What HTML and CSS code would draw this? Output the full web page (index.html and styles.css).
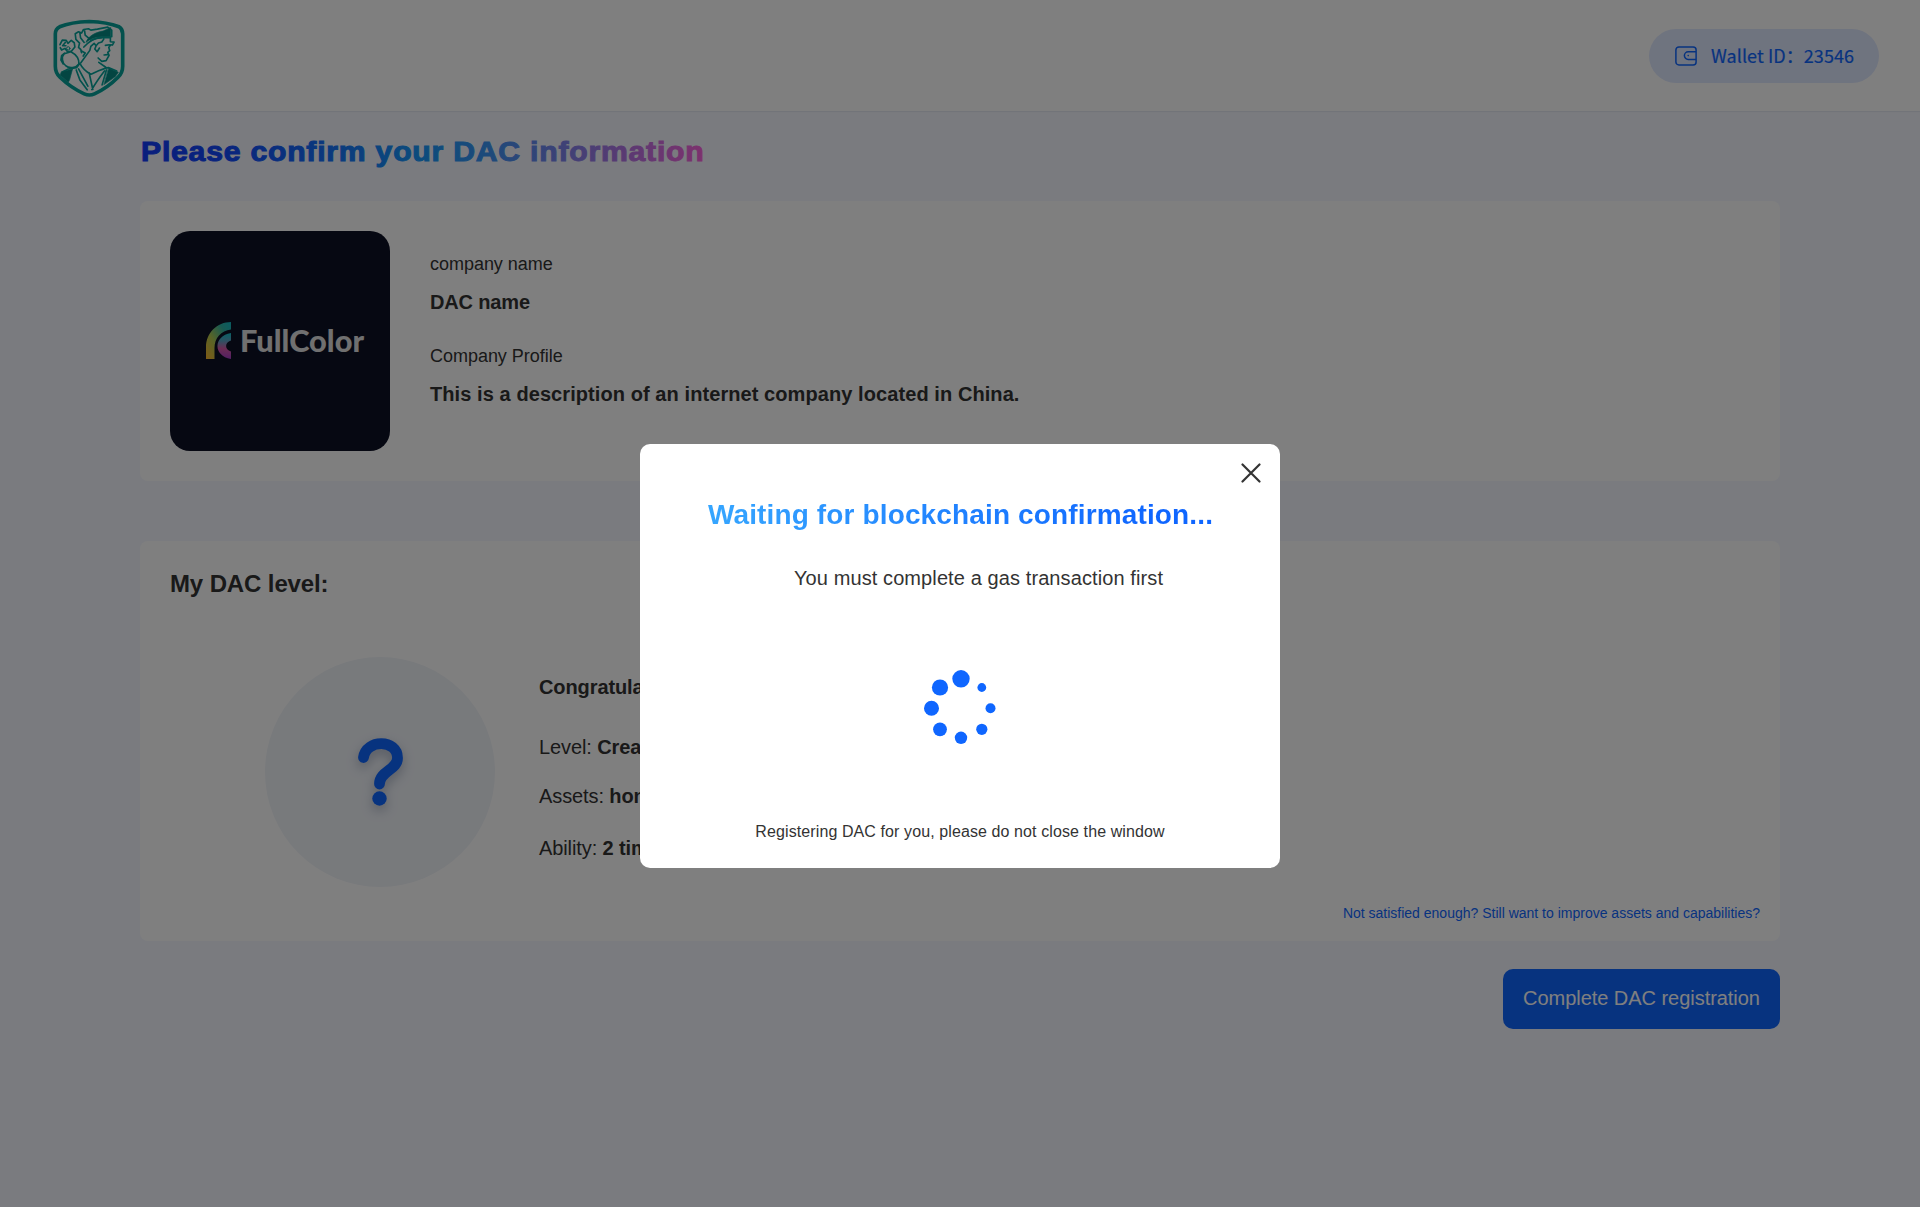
FILE: index.html
```html
<!DOCTYPE html>
<html lang="en">
<head>
<meta charset="utf-8">
<title>Confirm DAC information</title>
<link rel="stylesheet" href="styles.css">
</head>
<body>
<header class="topbar">
  <svg class="crest" viewBox="40 25 220 240" fill="none" stroke="#06a39a" stroke-linejoin="round" stroke-linecap="round">
    <path stroke-width="11" d="M149 35C178 36 214 41 239 51Q250 58 250 72V170Q250 190 236 203C214 225 190 242 165 253Q150 260 134 253C112 243 85 226 61 203Q47 190 47 170V72Q47 58 60 51C84 41 119 36 149 35Z"/>
    <path stroke-width="5" d="M107 72L117 66L126 70L132 59L147 57L154 61L174 58L205 52L217 61V81L190 82C165 83 149 94 133 112M107 72L109 89L120 100L117 113L124 120L126 129M121 69L123 84L134 98M135 62L137 76L151 88"/>
    <path fill="#078b84" stroke-width="2" d="M214 54V81L186 81C166 82 151 88 139 98C148 77 170 67 190 64Z"/>
    <path stroke-width="5" d="M154 92Q169 84 190 84L213 84V96L224 97L219 106L214 105L208 113L211 123L205 128L209 137L200 153L187 155L176 145M193 88L187 97L177 100L170 108L164 101L154 110L151 122L124 159M170 108L166 118L173 126L180 115M198 107L210 105M194 136L204 135"/>
    <path stroke-width="5" d="M61 105L68 91L80 92L85 101L95 92L104 99L106 112L96 124L84 126L76 116L66 121L62 114M77 98L69 108L79 108M94 126C109 134 119 147 118 163C110 175 89 178 78 168C67 160 65 141 74 132L94 126M75 130L66 138L64 151L71 163M126 124L137 130L131 139"/>
    <circle cx="86" cy="116" r="5" stroke-width="3"/>
    <path stroke-width="5" d="M121 161L111 174L86 178L67 188M121 161C130 179 141 187 154 194C168 188 188 177 207 174L232 184M178 158L199 173M149 190L160 240M157 240C169 219 179 205 195 184M117 178L145 230M110 181L121 211L143 241M201 181L188 226"/>
    <path fill="#078b84" stroke-width="2" d="M67 186L99 178L90 211L86 218L61 196ZM208 176L237 188L228 201L194 225Z"/>
  </svg>
  <div class="wallet">
    <svg class="wallet-icon" viewBox="0 0 22 20" fill="none" stroke="#0f66ff" stroke-width="1.5">
      <rect x=".9" y=".9" width="20.2" height="18" rx="3"/>
      <path d="M21 5.800H13.200a3.800 3.800 0 0 0 0 7.600H21"/>
      <circle cx="13.200" cy="9.600" r=".8" fill="#0f66ff" stroke="none"/>
    </svg>
    <span>Wallet ID：23546</span>
  </div>
</header>

<main class="content">
  <h1 class="page-title">
    <svg width="570" height="40" viewBox="0 0 570 40">
      <defs><linearGradient id="title" gradientUnits="userSpaceOnUse" x1="0" y1="0" x2="564" y2="0">
        <stop offset="0" stop-color="#123cfa"/><stop offset=".15" stop-color="#1348fa"/><stop offset=".5" stop-color="#1898fa"/><stop offset=".62" stop-color="#3c94f5"/><stop offset="1" stop-color="#fa62dc"/>
      </linearGradient></defs>
      <text x="1" y="28" textLength="563.500" lengthAdjust="spacingAndGlyphs" fill="url(#title)" stroke="url(#title)">Please confirm your DAC information</text>
    </svg>
  </h1>

  <section class="card company">
    <svg class="company-logo" viewBox="0 0 220 220">
      <defs>
        <linearGradient id="arc" x1="1" y1="0" x2="0" y2="1"><stop offset="0" stop-color="#13b7c4"/><stop offset=".25" stop-color="#2fb3a5"/><stop offset=".6" stop-color="#b2c94f"/><stop offset="1" stop-color="#fcb52c"/></linearGradient>
        <linearGradient id="cee" x1="0" y1="0" x2="0" y2="1"><stop offset="0" stop-color="#12c3cc"/><stop offset=".3" stop-color="#5aa4c4"/><stop offset=".6" stop-color="#d858a8"/><stop offset="1" stop-color="#a43fc8"/></linearGradient>
      </defs>
      <rect width="220" height="220" fill="#0d1024"/>
      <path fill="url(#arc)" d="M36 128V116C36 102 47 91 61 91V98.500C51 99.500 44.500 107 44.500 117V128Z"/>
      <path fill="url(#cee)" d="M61 102C43 105 43 125 61 128V120.500C54.500 118.500 54.500 111.500 61 109.500Z"/>
      <text x="70" y="121" textLength="124" lengthAdjust="spacingAndGlyphs">FullColor</text>
    </svg>
    <dl class="company-info">
      <dt>company name</dt>
      <dd>DAC name</dd>
      <dt>Company Profile</dt>
      <dd class="profile">This is a description of an internet company located in China.</dd>
    </dl>
  </section>

  <section class="card level">
    <h2>My DAC level:</h2>
    <div class="level-row">
      <div class="badge">
        <svg class="question" viewBox="0 0 46 68">
          <path d="M6.500 19.500C9 1 40.500 1 40.500 20C40.500 32 22.500 33 22.500 46" fill="none" stroke="#0f66ff" stroke-width="10.800" stroke-linecap="round"/>
          <circle cx="22.500" cy="60.500" r="7.200" fill="#0f66ff"/>
        </svg>
      </div>
      <div class="level-info">
        <p class="congrats">Congratulations</p>
        <p>Level: <b>Creator</b></p>
        <p>Assets: <b>honor</b></p>
        <p>Ability: <b>2 times</b></p>
      </div>
    </div>
    <a class="improve">Not satisfied enough? Still want to improve assets and capabilities?</a>
  </section>

  <button class="submit">Complete DAC registration</button>
</main>

<div class="overlay">
  <div class="dialog">
    <svg class="close" viewBox="0 0 20 20" stroke="#333" stroke-width="2.200" stroke-linecap="round"><path d="M1.500 1.500L18.500 18.500M18.500 1.500L1.500 18.500"/></svg>
    <h2 class="dialog-title">Waiting for blockchain confirmation...</h2>
    <p class="dialog-sub">You must complete a gas transaction first</p>
    <svg class="spinner" viewBox="0 0 72 75" fill="#0f66ff">
      <circle cx="37" cy="8.800" r="8.700"/><circle cx="57.800" cy="17.500" r="4.400"/><circle cx="66.500" cy="38.300" r="5"/><circle cx="57.800" cy="59.300" r="5.600"/>
      <circle cx="37" cy="67.800" r="6.200"/><circle cx="16" cy="59.300" r="6.900"/><circle cx="7.500" cy="38.300" r="7.500"/><circle cx="16" cy="17.500" r="8.100"/>
    </svg>
    <p class="dialog-note">Registering DAC for you, please do not close the window</p>
  </div>
</div>
</body>
</html>
```
FILE: styles.css
```css
* { box-sizing: border-box; margin: 0; padding: 0; }

body {
  height: 1207px;
  overflow: hidden;
  background: #f5f7ff;
  color: #333;
  font: 20px/24px "Liberation Sans", Arial, sans-serif;
}

.topbar {
  display: flex;
  justify-content: space-between;
  align-items: flex-start;
  height: 111px;
  padding: 18px 41px 0 53px;
  background: #fff;
  box-shadow: 0 1px 1px rgba(30, 50, 90, .07);
}
.crest { width: 73px; height: 80px; }

.wallet {
  display: flex;
  align-items: center;
  gap: 14px;
  width: 230px;
  height: 54px;
  margin-top: 11px;
  padding-left: 26px;
  border-radius: 27px;
  background: #dfe8ff;
  color: #0f66ff;
  font: 18px/26px "Noto Sans CJK SC", sans-serif;
}
.wallet span { padding-bottom: 2px; letter-spacing: .07px; -webkit-text-stroke: .2px; }
.wallet-icon { width: 22px; height: 20px; }

.content {
  display: flex;
  flex-direction: column;
  width: 1640px;
  margin: 0 auto;
}

.page-title { height: 90px; padding-top: 22px; line-height: 0; }
.page-title text {
  font: bold 27.5px "Liberation Sans", Arial, sans-serif;
  letter-spacing: .7px;
  stroke-width: 1px;
}

.card { border-radius: 8px; background: #fff; }

.company {
  display: flex;
  gap: 40px;
  height: 280px;
  padding: 30px;
}
.company-logo { width: 220px; height: 220px; border-radius: 20px; }
.company-logo text { font: 900 29.5px Lato, sans-serif; fill: #e0e0e0; }

.company-info { padding-top: 21px; }
.company-info dt { font-size: 18px; margin-bottom: 14px; letter-spacing: -.03px; }
.company-info dd { font-weight: bold; margin-bottom: 30px; letter-spacing: -.15px; }
.company-info .profile { letter-spacing: .08px; }

.level {
  display: flex;
  flex-direction: column;
  height: 400px;
  margin-top: 60px;
  padding: 29px 20px 20px 30px;
}
.level h2 { font-size: 24px; line-height: 28px; letter-spacing: -.12px; }
.level-row { display: flex; gap: 44px; padding: 59px 0 0 95px; }
.badge {
  display: flex;
  justify-content: center;
  align-items: center;
  width: 230px;
  height: 230px;
  border-radius: 50%;
  background: #f1f4f9;
}
.question { width: 46px; height: 68px; overflow: visible; filter: drop-shadow(0 5px 6px rgba(20, 40, 90, .3)); }
.level-info { padding-top: 18px; letter-spacing: -.1px; }
.level-info p { margin-bottom: 25px; }
.level-info .congrats { font-weight: bold; margin-bottom: 36px; }
.level-info p:last-child { margin-top: 28px; }
.improve { margin-top: auto; align-self: flex-end; color: #0f66ff; font-size: 14px; line-height: 16px; }

.submit {
  align-self: flex-end;
  width: 277px;
  height: 60px;
  margin-top: 28px;
  padding-bottom: 2px;
  border: 0;
  border-radius: 10px;
  background: #0f66ff;
  color: #fff;
  font: 20px/24px "Liberation Sans", Arial, sans-serif;
  letter-spacing: -.04px;
}

.overlay {
  position: fixed;
  inset: 0;
  display: flex;
  justify-content: center;
  align-items: flex-start;
  padding-top: 444px;
  background: rgba(0, 0, 0, .5);
}
.dialog {
  display: flex;
  flex-direction: column;
  align-items: center;
  width: 640px;
  height: 424px;
  padding-top: 19px;
  border-radius: 10px;
  background: #fff;
}
.close { align-self: flex-end; width: 20px; height: 20px; margin-right: 19px; }
.dialog-title {
  margin: 16px 0 0 1px;
  font-size: 28px;
  line-height: 32px;
  letter-spacing: .14px;
  background: linear-gradient(90deg, #36a6ff, #0f66ff 88%);
  -webkit-background-clip: text;
  background-clip: text;
  color: transparent;
}
.dialog-sub { margin: 35px 0 0 37px; letter-spacing: .1px; }
.spinner { width: 72px; height: 75px; margin-top: 80px; }
.dialog-note { margin-top: 77px; font-size: 16px; line-height: 20px; letter-spacing: .1px; }
```
